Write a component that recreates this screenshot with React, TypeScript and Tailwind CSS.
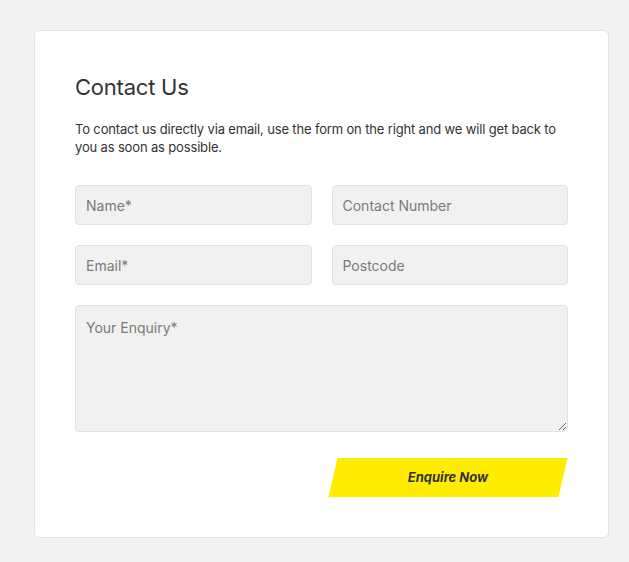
export default function App() {
  const field =
    'h-[40px] w-full rounded-[4px] border border-[#e2e2e2] bg-[#f1f1f1] px-[10px] text-[14px] text-[#333] placeholder:text-[#7a7a7a] focus:outline-none'

  return (
    <div
      className="min-h-[562px] bg-[#f3f3f3] pl-[34px] pr-[20px] pt-[30px] pb-[24px]"
      style={{ fontFamily: 'Inter, "Liberation Sans", Arial, sans-serif' }}
    >
      <div className="rounded-[5px] border border-[#e4e4e4] bg-white px-[40px] pt-[41px] pb-[40px]">
        <h1 className="text-[22px] font-normal leading-[30px] tracking-[-0.01em] text-[#333]">
          Contact Us
        </h1>
        <p className="mt-[18px] text-[13px] leading-[18px] tracking-[-0.012em] text-[#333]">
          To contact us directly via email, use the form on the right and we will get back to you
          as soon as possible.
        </p>

        <form className="mt-[29px]" onSubmit={(e) => e.preventDefault()}>
          <div className="grid grid-cols-2 gap-x-[20px] gap-y-[20px]">
            <input className={field} placeholder="Name*" />
            <input className={field} placeholder="Contact Number" />
            <input className={field} placeholder="Email*" />
            <input className={field} placeholder="Postcode" />
            <textarea
              className="col-span-2 h-[127px] w-full rounded-[4px] border border-[#e2e2e2] bg-[#f1f1f1] px-[10px] py-[11px] text-[14px] text-[#333] placeholder:text-[#7a7a7a] focus:outline-none"
              placeholder="Your Enquiry*"
            />
          </div>

          <div className="mt-[26px] flex justify-end pr-[5px]">
            <button
              type="submit"
              className="h-[39px] w-[230px] -skew-x-[13deg] bg-[#ffec00]"
            >
              <span className="block skew-x-[13deg] text-[13px] font-bold italic text-[#333]">
                Enquire Now
              </span>
            </button>
          </div>
        </form>
      </div>
    </div>
  )
}
